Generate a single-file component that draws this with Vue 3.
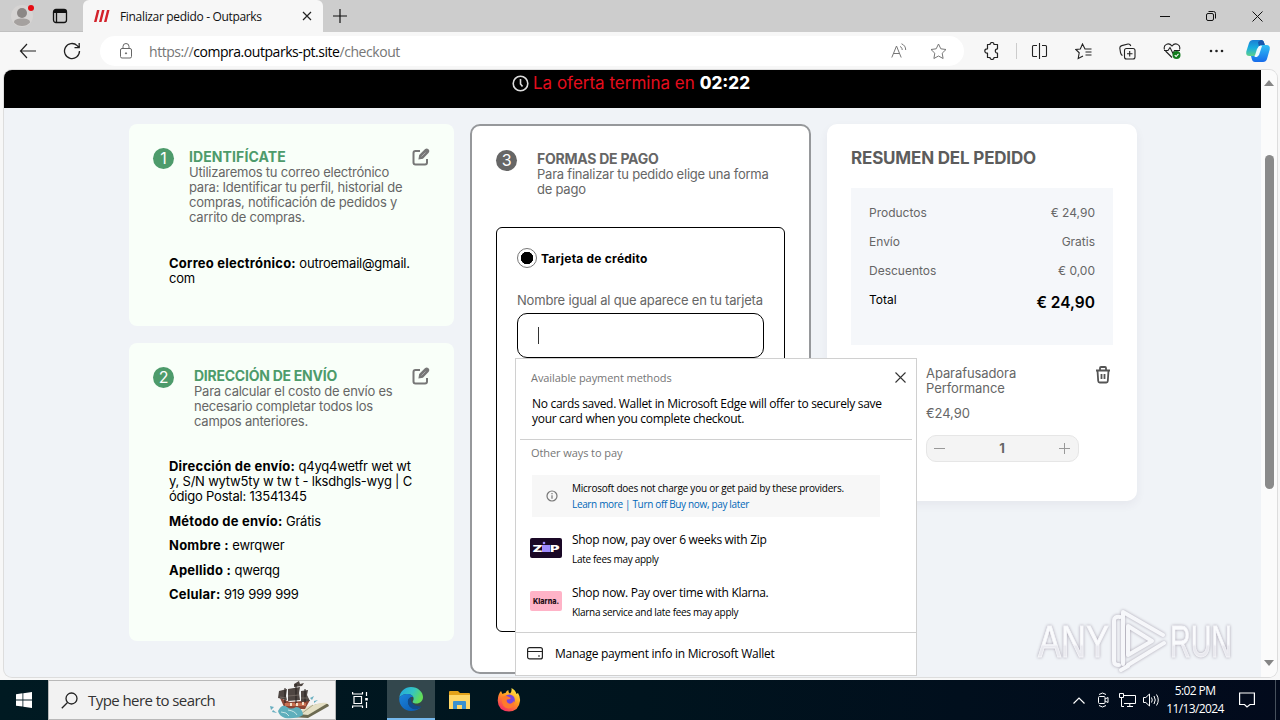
<template>
  <div class="screen">
    <!-- tab strip -->
    <div class="tabs">
      <div class="tabs-left">
        <svg class="avatar" width="26" height="26" viewBox="0 0 26 26">
          <circle cx="12" cy="15" r="11" fill="#d6d4d3" />
          <circle cx="12" cy="12" r="5" fill="#8b8785" />
          <path d="M4 21.500c0-3 3-4 8-4s8 1 8 4c-2 2.500-5 3.500-8 3.500s-6-1-8-3.500z" fill="#a5a19f" />
          <circle cx="21" cy="7" r="3" fill="#e60b12" />
        </svg>
        <svg class="actions" width="16" height="16" viewBox="0 0 16 16" fill="none" stroke="#111" stroke-width="1.300">
          <rect x="1.500" y="1.500" width="13" height="13" rx="2.500" />
          <path d="M2 3.500h12" stroke-width="3" />
          <path d="M4.500 4v10" />
        </svg>
      </div>
      <div class="tab">
        <svg width="17" height="14" viewBox="0 0 17 14" fill="#d3222b">
          <path d="M4 1h2.500L3.500 13H1zM9 1h2.500L8.500 13H6zM14 1h2.500l-3 12H11z" />
        </svg>
        <span class="tab-title">Finalizar pedido - Outparks</span>
        <svg class="tab-close" width="10" height="10" viewBox="0 0 10 10" stroke="#222" stroke-width="1.200"><path d="M1 1l8 8M9 1L1 9" /></svg>
      </div>
      <svg class="plus" width="14" height="14" viewBox="0 0 14 14" stroke="#111" stroke-width="1.200"><path d="M7 0v14M0 7h14" /></svg>
      <div class="win">
        <svg width="10" height="10" viewBox="0 0 10 10" stroke="#111"><path d="M0 5.500h10" /></svg>
        <svg width="12" height="12" viewBox="0 0 12 12" fill="none" stroke="#111"><rect x="1.500" y="3.500" width="7" height="7" rx="1.500" /><path d="M3.500 1.500h5a2 2 0 0 1 2 2v5" /></svg>
        <svg width="11" height="11" viewBox="0 0 11 11" stroke="#111"><path d="M.5.5l10 10M10.500.5l-10 10" /></svg>
      </div>
    </div>

    <!-- address bar -->
    <div class="toolbar">
      <svg class="back" width="18" height="16" viewBox="0 0 18 16" fill="none" stroke="#222" stroke-width="1.200"><path d="M8 1L1.500 8 8 15M1.500 8H17" /></svg>
      <svg class="reload" width="18" height="18" viewBox="0 0 18 18" fill="none" stroke="#222" stroke-width="1.300"><path d="M16.500 9A7.500 7.500 0 1 1 14.200 3.600L16 5.500M16.200 1v4.700h-4.700" /></svg>
      <div class="address">
        <svg width="14" height="16" viewBox="0 0 14 16" fill="none" stroke="#666"><rect x="1.500" y="5.500" width="11" height="9.500" rx="1.500" /><path d="M4 5.500V3.500a3 3 0 0 1 6 0v2" /><circle cx="7" cy="10.300" r=".6" fill="#666" /></svg>
        <span class="url">https://<b>compra.outparks-pt.site</b>/checkout</span>
        <svg class="read" width="16" height="16" viewBox="0 0 16 16" fill="none" stroke="#777"><path d="M.8 14.500L5.500 3l4.700 11.500M2.500 10.500h6M9 3.500c1.500.6 2.200 1.800 2.200 3.500M10.500.8c2.700 1 4.200 3.200 4.200 6.200" /></svg>
        <svg width="17" height="17" viewBox="0 0 17 17" fill="none" stroke="#777"><path :d="starPath" /></svg>
      </div>
      <div class="tools">
        <svg width="17" height="18" viewBox="0 0 17 18" fill="none" stroke="#222" stroke-width="1.200" stroke-linejoin="round"><path d="M4.500 2.500H7a2 2 0 0 1 4 0h3.500v4.300a2.200 2.200 0 0 0 0 4.400v4.300H11a2 2 0 0 1-4 0H4.500v-4.300H4a2.200 2.200 0 0 1 0-4.400h.5z" /></svg>
        <i class="bar"></i>
        <svg width="17" height="16" viewBox="0 0 17 16" fill="none" stroke="#222" stroke-width="1.100"><path d="M6 2.500H2.500q-1 0-1 1v9q0 1 1 1H6M11 2.500h3.500q1 0 1 1v9q0 1-1 1H11M8.500 0v16" /></svg>
        <svg width="17" height="17" viewBox="0 0 17 17" fill="none" stroke="#222" stroke-width="1.100"><path d="M11 6H10L7.500 1 5.300 6 .8 6.500l3.400 3.300-1 5.700L8 13M10.500 6h6M10.500 9h6M10.500 12h6" /></svg>
        <svg width="17" height="17" viewBox="0 0 17 17" fill="none" stroke="#222" stroke-width="1.100"><rect x="5.500" y="5.500" width="10.500" height="10.500" rx="2" /><path d="M10.700 8v5.500M8 10.700h5.500M3.500 12.500C2 12 2 11 1.500 9.500L.8 5c0-1.500.7-2 2-2.400L9 1c1.500-.2 2.300.3 2.800 2" /></svg>
        <svg width="19" height="18" viewBox="0 0 19 18" fill="none" stroke="#222" stroke-width="1.100"><path d="M9 15.500L2.500 9M1.500 7.500C0 3 5.500-.5 9 4c3.500-4.500 9-1 7.500 3.500M1 8.500h4L7 5.500l3 6 1.500-3H17" /><circle cx="13.500" cy="13" r="4" fill="#117b1c" stroke="none" /><path d="M11.700 13.200l1.400 1.300 2.400-2.600" stroke="#fff" /></svg>
        <svg width="15" height="4" viewBox="0 0 15 4" fill="#222"><circle cx="2" cy="2" r="1.300" /><circle cx="7.500" cy="2" r="1.300" /><circle cx="13" cy="2" r="1.300" /></svg>
      </div>
      <svg class="copilot" width="26" height="24" viewBox="0 0 26 24">
        <defs>
          <linearGradient id="cp1" x1="0" y1="0" x2="0" y2="1"><stop offset="0" stop-color="#1a7fd4" /><stop offset=".5" stop-color="#18aee0" /><stop offset="1" stop-color="#5fd08a" /></linearGradient>
          <linearGradient id="cp2" x1="0" y1="0" x2="0" y2="1"><stop offset="0" stop-color="#2fc0f5" /><stop offset="1" stop-color="#176bea" /></linearGradient>
        </defs>
        <path d="M8 1h8q2.500 0 3.200 3l.6 2h-3.600q-2 0-2.700 2.500l-1.800 6q-.8 2.500-3 2.500H4.500Q.5 17 1.300 12.500L4 4Q5 1 8 1z" fill="url(#cp1)" />
        <path d="M18 23h-8q-2.500 0-3.200-3l-.8-3h3.500q2.300 0 3-2.500l1.800-6Q15 6 17 6h4.500q4 0 3.200 4.500L22 20q-1 3-4 3z" fill="url(#cp2)" />
        <path d="M16 1q2.500 0 3.200 3l.6 2h-3.600q-1.500 0-2.300 1.500L13 3z" fill="#1857ad" />
        <path d="M12 10l2-3h3l-3 9-2 2H9.500z" fill="#eefaff" />
      </svg>
    </div>

    <!-- web page -->
    <div class="viewport">
      <div class="page">
        <div class="offer">
          <svg width="17" height="17" viewBox="0 0 17 17" fill="none" stroke="#ddd" stroke-width="1.600"><circle cx="8.500" cy="8.500" r="7.300" /><path d="M8.500 4v5l2 2.500" /></svg>
          <span class="offer-text">La oferta termina en</span>
          <span class="offer-time">02:22</span>
        </div>
        <div class="columns">
          <div class="left">
            <section v-for="step in steps" :key="step.n" class="card done" :class="'step' + step.n">
              <div class="head">
                <span class="num">{{ step.n }}</span>
                <div class="head-text">
                  <h2>{{ step.title }}</h2>
                  <p v-for="line in step.lines" :key="line">{{ line }}</p>
                </div>
                <svg class="edit" width="18" height="18" viewBox="0 0 18 18" fill="none" stroke="#777"><path d="M8 3H3.500Q1.500 3 1.500 5v9.500q0 2 2 2H13q2 0 2-2V11" stroke-width="2" /><path d="M7.500 10.500l.5-3L13.500 2q1.200-1 2.300 0t0 2.300L10.500 10z" fill="#777" stroke-width="1.800" /><path d="M9.500 8.500l4-4" stroke="#ccc" stroke-width=".6" /></svg>
              </div>
              <div class="info">
                <div v-for="row in step.rows" :key="row.label" class="info-row">
                  <div><b>{{ row.label }}</b> {{ row.value[0] }}</div>
                  <div v-for="more in row.value.slice(1)" :key="more">{{ more }}</div>
                </div>
              </div>
            </section>
          </div>

          <section class="pay">
            <div class="head">
              <span class="num">3</span>
              <div class="head-text">
                <h2>FORMAS DE PAGO</h2>
                <p>Para finalizar tu pedido elige una forma</p>
                <p>de pago</p>
              </div>
            </div>
            <div class="method">
              <div class="radio"><i></i><b>Tarjeta de crédito</b></div>
              <label>Nombre igual al que aparece en tu tarjeta</label>
              <div class="field"><i class="caret"></i></div>
            </div>
          </section>

          <section class="summary">
            <h2>RESUMEN DEL PEDIDO</h2>
            <div class="totals">
              <div v-for="t in totals" :key="t.name" class="total-row"><span>{{ t.name }}</span><span>{{ t.price }}</span></div>
              <div class="total-row grand"><span>Total</span><strong>€ 24,90</strong></div>
            </div>
            <div class="product">
              <div class="product-text">
                <p>Aparafusadora</p>
                <p>Performance</p>
                <p class="price">€24,90</p>
                <div class="qty">
                  <svg width="11" height="11" viewBox="0 0 11 11" stroke="#999"><path d="M0 5.500h11" /></svg>
                  <b>1</b>
                  <svg width="11" height="11" viewBox="0 0 11 11" stroke="#999"><path d="M0 5.500h11M5.500 0v11" /></svg>
                </div>
              </div>
              <svg width="16" height="18" viewBox="0 0 16 18" fill="none" stroke="#555" stroke-width="1.800"><path d="M1 4.500h14M5 4V2q0-1 1-1h4q1 0 1 1v2M2.500 4.500l.7 10.500q.1 1.500 1.500 1.500h6.600q1.400 0 1.500-1.500l.7-10.500M6.500 8v5M9.500 8v5" /></svg>
            </div>
          </section>
        </div>

        <svg class="watermark" width="210" height="76" viewBox="0 0 210 76">
          <defs><linearGradient id="wm" x1="0" y1="0" x2="0" y2="1"><stop offset=".55" stop-color="#fafbfd" /><stop offset=".6" stop-color="#e9e9ef" /></linearGradient></defs>
          <g fill="url(#wm)" stroke="#f6f7fa" stroke-width=".8">
            <text x="2" y="49" textLength="71" lengthAdjust="spacingAndGlyphs">ANY</text>
            <text x="134" y="49" textLength="62" lengthAdjust="spacingAndGlyphs">RUN</text>
          </g>
          <g fill="none" stroke="#f6f7fa" stroke-width="4" stroke-linejoin="round" stroke-linecap="round">
            <path d="M84 9q-6-1-6 4v40q0 4 5 4M87 50V4l40 23M87 20v36M92 57l36-22M92 18l24 15-24 14zM85 62l7-4" />
          </g>
        </svg>
      </div>
      <div class="scroll">
        <svg width="10" height="6" viewBox="0 0 10 6"><path d="M5 0l5 6H0z" fill="#858585" /></svg>
        <i></i>
        <svg width="10" height="6" viewBox="0 0 10 6"><path d="M5 6l5-6H0z" fill="#858585" /></svg>
      </div>
    </div>

    <!-- wallet autofill popup -->
    <div class="wallet">
      <div class="wallet-top">
        <span class="muted">Available payment methods</span>
        <svg width="11" height="11" viewBox="0 0 11 11" stroke="#333" stroke-width="1.100"><path d="M.5.5l10 10M10.500.5l-10 10" /></svg>
      </div>
      <div class="nocards">
        <p>No cards saved. Wallet in Microsoft Edge will offer to securely save</p>
        <p>your card when you complete checkout.</p>
      </div>
      <div class="muted other">Other ways to pay</div>
      <div class="notice">
        <svg width="12" height="12" viewBox="0 0 12 12" fill="none" stroke="#777" stroke-width="1.200"><circle cx="6" cy="6" r="5" /><path d="M6 5.200v3.500M6 3v1.200" /></svg>
        <div>
          <p>Microsoft does not charge you or get paid by these providers.</p>
          <p class="links">Learn more | Turn off Buy now, pay later</p>
        </div>
      </div>
      <div class="offer-row">
        <svg width="32" height="20" viewBox="0 0 32 20">
          <rect width="32" height="20" rx="2" fill="#1a0826" />
          <rect x="12" y="7" width="8" height="7" fill="#a08cff" />
          <circle cx="14" cy="5" r="1.300" fill="#a08cff" />
          <text class="zip" x="2.500" y="14" textLength="10" lengthAdjust="spacingAndGlyphs">Z</text>
          <text class="zip" x="20" y="14" textLength="9.500" lengthAdjust="spacingAndGlyphs">P</text>
        </svg>
        <div><p class="big">Shop now, pay over 6 weeks with Zip</p><p class="small">Late fees may apply</p></div>
      </div>
      <div class="offer-row second">
        <svg width="32" height="20" viewBox="0 0 32 20">
          <rect width="32" height="20" rx="2" fill="#ffb3c7" />
          <text class="klarna" x="3" y="13" textLength="26" lengthAdjust="spacingAndGlyphs">Klarna.</text>
        </svg>
        <div><p class="big">Shop now. Pay over time with Klarna.</p><p class="small">Klarna service and late fees may apply</p></div>
      </div>
      <div class="manage">
        <svg width="16" height="13" viewBox="0 0 16 13" fill="none" stroke="#222" stroke-width="1.200"><rect x=".6" y=".6" width="14.800" height="11.300" rx="2" /><path d="M.6 4.500h14.800M11 9h2" /></svg>
        <span>Manage payment info in Microsoft Wallet</span>
      </div>
    </div>

    <!-- windows taskbar -->
    <div class="taskbar">
      <div class="start"><svg width="16" height="16" viewBox="0 0 16 16" fill="#fff"><path d="M0 2.200L6.500 1.300v6.200H0zM7.300 1.200L16 0v7.500H7.300zM0 8.400h6.500v6.200L0 13.700zM7.300 8.400H16V16l-8.700-1.200z" /></svg></div>
      <div class="search">
        <svg width="17" height="17" viewBox="0 0 17 17" fill="none" stroke="#222" stroke-width="1.300"><circle cx="10.500" cy="6.500" r="5.500" /><path d="M6.500 10.500L.8 16.200" /></svg>
        <span>Type here to search</span>
        <svg class="ship" width="62" height="38" viewBox="0 0 62 38">
          <path d="M29 33l17-9q6-2 14-1l1 2-21 12-17-1z" fill="#6c6a51" />
          <path d="M31 32q7-8 15-8 6-3 14-2L40 34q-5 0-9-2z" fill="#e4dfc4" />
          <path d="M45 24L33 33" stroke="#aaa688" />
          <path d="M12 17l5 11h20l5-9-8 1-12 1z" fill="#8c4635" />
          <path d="M17 22h21v3H17z" fill="#c76f50" />
          <path d="M10 30q4-8 9-4 4 3 9 0 6 0 7 8-6 4-18 3-6-2-7-7z" fill="#5fafbc" />
          <path d="M13 31q6 0 8 4M20 29q7 1 9 5" stroke="#c6e5e6" fill="none" />
          <path d="M2 25l4 1-3 3zM5 29l4 3-5-1zM42 17l4-2-2 4zM46 20l4-1-4 3z" fill="#68aec0" />
          <path d="M11 10l8-2-1 7 1 4-9-2zM20 8l12-2-1 6 1 7-12 1zM33 10l7-1-1 5 3 6-9 1zM26 3l5-3 1 3 4-1-2 3-8 1z" fill="#4f4642" />
          <path d="M17 7v15M28 3v20M37 8v13" stroke="#241e1c" />
          <path d="M12 16l6 1M20 15l11-1M33 17l7 0" stroke="#7a6e68" stroke-width=".8" />
          <path d="M22 22h2v3h-2zM28 22h2v3h-2zM34 21h2v3h-2z" fill="#f2dfc8" />
        </svg>
      </div>
      <div class="app">
        <svg width="16" height="16" viewBox="0 0 16 16" fill="none" stroke="#fff" stroke-width="1.200"><path d="M0 2h11M0 14h11M2 4.500h7.500v7H2zM.6 0v2M.6 14v2M10.500 0v2M10.500 14v2M14.500 0v4M14.500 10v6" /><path d="M13.200 6h2.600v2.500h-2.600z" fill="#fff" stroke="none" /></svg>
      </div>
      <div class="app active">
        <svg width="24" height="24" viewBox="0 0 24 24">
          <defs>
            <linearGradient id="eg1" x1="0" y1="0" x2="1" y2=".4"><stop offset="0" stop-color="#1fa4e4" /><stop offset=".6" stop-color="#35c5c0" /><stop offset="1" stop-color="#62dc58" /></linearGradient>
            <linearGradient id="eg2" x1="0" y1="0" x2="1" y2="1"><stop offset="0" stop-color="#1b84dc" /><stop offset="1" stop-color="#0b57ae" /></linearGradient>
          </defs>
          <path d="M.3 11C1 4 6 0 12 0c7 0 12 5 12 10 0 4-3 6.500-6.500 6.500-3 0-4.500-1-3.500-2.500 2-3-.5-7-5-7C5 7 1.500 8.500.3 11z" fill="url(#eg1)" />
          <path d="M.3 11C1.500 8.500 5 7 9 7c3 0 5 2 5.500 3.500-2-1.500-6 1-5.500 5 .5 5 6 8 11 5.500l2-1C20 22.500 16 24 12 24 5 24-.5 18 .3 11z" fill="url(#eg2)" />
          <path d="M9 15.500c-.5-3 1.500-5 3-5.500-1 3 0 9 9.500 9.500l.8.300C20 21.500 17.500 22.300 16 22.200 12 22 9.500 19 9 15.500z" fill="#114a8b" />
        </svg>
      </div>
      <div class="app">
        <svg width="22" height="20" viewBox="0 0 22 20">
          <path d="M1 1h8l2 2h9q1 0 1 1v14H0V2q0-1 1-1z" fill="#e3a21a" /><path d="M0 5h21v14H0z" fill="#ffd768" /><path d="M4 19v-7q0-1 1-1h11q1 0 1 1v7h-4v-4H8v4z" fill="#3a91cf" />
        </svg>
      </div>
      <div class="app">
        <svg width="24" height="24" viewBox="0 0 24 24">
          <defs><linearGradient id="fx" x1=".8" y1="0" x2=".2" y2="1"><stop offset="0" stop-color="#fff04a" /><stop offset=".45" stop-color="#ff9a20" /><stop offset="1" stop-color="#f5246a" /></linearGradient></defs>
          <path d="M4 3l1.500 3q1.500-1 3-1 1-2.500 3-3-.5 2.500 1.500 3.500Q15 4 14.500 0q4 2 5 6l1.500-1q2.500 4 2 8-1 10-11 10.500Q1 23 .7 12.500 1 6 4 3z" fill="url(#fx)" />
          <circle cx="12.300" cy="12" r="5.500" fill="#7545df" /><path d="M5 9q4-2 7 0l2 1q-2 2-4 1.500-1 2 1 3.500 3 2 6-2 1 7-5.500 7.500Q4 20 5 9z" fill="#ff7a2d" />
        </svg>
      </div>
      <div class="tray">
        <svg width="12" height="7" viewBox="0 0 12 7" fill="none" stroke="#fff" stroke-width="1.200"><path d="M.5 6.500L6 1l5.500 5.500" /></svg>
        <svg width="12" height="16" viewBox="0 0 12 16" fill="none" stroke="#fff"><rect x="1.500" y="4.500" width="6.500" height="7" rx="1" /><path d="M8 7l3-1.500v5L8 9M2 2.500q3.500-3 7 0M2 13.500q3.500 3 7 0" /></svg>
        <svg width="17" height="14" viewBox="0 0 17 14" fill="none" stroke="#fff"><path d="M5 2.500h11.500v8H5M8 13.500h6M10.800 10.500v3M.5.500h4v4h-4zM2.500 4.500v9H5" /></svg>
        <svg width="17" height="14" viewBox="0 0 17 14" fill="none" stroke="#fff"><path d="M.5 4.500h2.300L6.500 1v12L2.800 9.500H.5zM8.500 4.500q1.500 2.500 0 5M11 3q2.500 4 0 8M13.500 1.500q3.500 5.500 0 11" /></svg>
      </div>
      <div class="clock"><span>5:02 PM</span><span>11/13/2024</span></div>
      <svg class="notes" width="16" height="16" viewBox="0 0 16 16" fill="none" stroke="#fff" stroke-width="1.200"><path d="M.6 1h14.800v11.500H11L8 15l-2.500-2.500H.6z" /></svg>
      <i class="peek"></i>
    </div>
  </div>
</template>

<script setup>
import { ref } from "vue";

const starPath =
  "M8.500 1l2.300 4.800 5.200.7-3.800 3.700.9 5.300-4.600-2.500-4.600 2.500.9-5.300L1 6.500l5.200-.7z";

const steps = ref([
  {
    n: 1,
    title: "IDENTIFÍCATE",
    lines: [
      "Utilizaremos tu correo electrónico",
      "para: Identificar tu perfil, historial de",
      "compras, notificación de pedidos y",
      "carrito de compras.",
    ],
    rows: [{ label: "Correo electrónico:", value: ["outroemail@gmail.", "com"] }],
  },
  {
    n: 2,
    title: "DIRECCIÓN DE ENVÍO",
    lines: [
      "Para calcular el costo de envío es",
      "necesario completar todos los",
      "campos anteriores.",
    ],
    rows: [
      {
        label: "Dirección de envío:",
        value: [
          "q4yq4wetfr wet wt",
          "y, S/N wytw5ty w tw t - lksdhgls-wyg | C",
          "ódigo Postal: 13541345",
        ],
      },
      { label: "Método de envío:", value: ["Grátis"] },
      { label: "Nombre :", value: ["ewrqwer"] },
      { label: "Apellido :", value: ["qwerqg"] },
      { label: "Celular:", value: ["919 999 999"] },
    ],
  },
]);

const totals = ref([
  { name: "Productos", price: "€ 24,90" },
  { name: "Envío", price: "Gratis" },
  { name: "Descuentos", price: "€ 0,00" },
]);
</script>

<style>
body {
  margin: 0;
  overflow: hidden;
}
</style>

<style scoped>
* {
  box-sizing: border-box;
}
p,
h2 {
  margin: 0;
}
svg {
  flex: none;
}
.screen {
  position: relative;
  display: flex;
  flex-direction: column;
  width: 1280px;
  height: 720px;
  overflow: hidden;
  background: #f7f7f7;
  font-family: "Open Sans", sans-serif;
  white-space: nowrap;
}
/* tab strip */
.tabs {
  display: flex;
  height: 32px;
  background: #cdcdcd;
}
.tabs-left {
  display: flex;
  align-items: center;
  width: 83px;
  padding-left: 10px;
  gap: 16px;
  border-bottom: 1px solid #c0c0c0;
}
.avatar {
  margin-top: -4px;
}
.tab {
  display: flex;
  align-items: center;
  width: 240px;
  padding: 0 11px 0 10px;
  background: #f7f7f7;
  border-radius: 6px 6px 0 0;
}
.tab-title {
  margin-left: 10px;
  font-size: 12px;
  letter-spacing: -0.33px;
  color: #111;
}
.tab-close {
  margin-left: auto;
}
.plus {
  margin: 9px 0 0 10px;
}
.win {
  display: flex;
  align-items: center;
  gap: 35px;
  margin-left: auto;
  padding-right: 17px;
}
/* address bar */
.toolbar {
  display: flex;
  align-items: center;
  height: 38px;
  padding: 0 9px 0 19px;
}
.reload {
  margin-left: 26px;
}
.address {
  display: flex;
  align-items: center;
  width: 864px;
  height: 30px;
  margin-left: 19px;
  padding: 0 17px 0 19px;
  background: #fff;
  border-radius: 15px;
}
.url {
  margin-left: 16px;
  font-size: 14px;
  letter-spacing: -0.45px;
  color: #767676;
}
.url b {
  font-weight: 400;
  color: #000;
}
.read {
  margin: 0 23px 0 auto;
}
.tools {
  display: flex;
  align-items: center;
  gap: 27px;
  margin-left: 19px;
}
.bar {
  width: 1px;
  height: 16px;
  margin: 0 -13px 0 -11px;
  background: #ccc;
}
.copilot {
  margin-left: auto;
}
/* page */
.viewport {
  display: flex;
  width: 1273px;
  height: 607px;
  margin-left: 4px;
  border-radius: 8px;
  overflow: hidden;
  background: #f0f3f7;
  box-shadow: 0 0 0 1px #ddd;
}
.page {
  position: relative;
  width: 1257px;
  font-family: Inter, sans-serif;
}
.offer {
  display: flex;
  justify-content: center;
  height: 38px;
  padding: 5px 3px 0 0;
  background: #000;
  font-size: 17px;
  line-height: 17px;
}
.offer-text {
  margin-left: 4px;
  color: #e50d1d;
}
.offer-time {
  margin-left: 5px;
  font-weight: 800;
  color: #fff;
}
.columns {
  display: flex;
  align-items: flex-start;
  gap: 16px;
  padding: 16px 0 0 125px;
}
.left {
  display: flex;
  flex-direction: column;
  gap: 17px;
}
.card {
  width: 325px;
  padding: 24px;
  background: #f9fff9;
  border-radius: 8px;
}
.step1 {
  height: 202px;
}
.step2 {
  height: 298px;
}
.head {
  display: flex;
  align-items: flex-start;
  font-size: 13px;
  line-height: 15px;
  letter-spacing: -0.23px;
  color: #666;
}
.num {
  flex: none;
  width: 21px;
  height: 21px;
  border-radius: 50%;
  background: #4d9b6b;
  color: #fff;
  font-size: 16px;
  line-height: 21px;
  text-align: center;
}
.head-text {
  margin-left: 15px;
}
.step2 .head-text {
  margin-left: 20px;
}
.head h2 {
  font-size: 14px;
  line-height: 17px;
  font-weight: 700;
  letter-spacing: -0.25px;
}
.done h2 {
  color: #4d9b6b;
}
.step1 .head h2 {
  letter-spacing: 0.1px;
}
.edit {
  margin-left: auto;
}
.info {
  padding: 31px 0 0 16px;
  font-size: 13px;
  line-height: 15px;
  letter-spacing: -0.21px;
  color: #000;
}
.step2 .info {
  padding-top: 30px;
}
.info b {
  letter-spacing: 0.22px;
}
.info-row {
  margin-bottom: 9.500px;
}
.pay {
  width: 341px;
  height: 550px;
  padding: 24px;
  background: #fff;
  border: 2px solid #96989b;
  border-radius: 10px;
}
.pay .num {
  background: #666;
}
.pay .head-text {
  margin-left: 20px;
}
.method {
  height: 405px;
  margin-top: 30px;
  padding: 20px;
  border: 1px solid #000;
  border-radius: 6px;
}
.radio {
  display: flex;
  align-items: center;
  font-size: 12px;
  letter-spacing: 0.22px;
}
.radio i {
  width: 20px;
  height: 20px;
  margin-right: 4px;
  border: 1px solid #777;
  border-radius: 50%;
  background: radial-gradient(#000 6px, #fff 6.500px);
}
.method label {
  display: block;
  margin-top: 25px;
  font-size: 13px;
  line-height: 15px;
  letter-spacing: -0.2px;
  color: #666;
}
.field {
  width: 247px;
  height: 45px;
  margin-top: 5px;
  padding: 13px 20px;
  border: 1px solid #000;
  border-radius: 10px;
}
.caret {
  display: block;
  width: 1px;
  height: 17px;
  background: #333;
}
.summary {
  width: 310px;
  height: 377px;
  padding: 24px;
  background: #fff;
  border-radius: 10px;
  box-shadow: 0 4px 10px rgba(60, 50, 80, 0.06);
}
.summary h2 {
  font-size: 17px;
  line-height: 20px;
  font-weight: 700;
  letter-spacing: -0.18px;
  color: #5c5c5c;
}
.totals {
  height: 157px;
  margin-top: 20px;
  padding: 17px 18px;
  background: #f5f7fa;
}
.total-row {
  display: flex;
  justify-content: space-between;
  height: 29px;
  font-size: 12px;
  line-height: 15px;
  color: #666;
}
.grand {
  color: #000;
}
.grand strong {
  font-size: 15.500px;
  line-height: 21px;
  font-weight: 600;
}
.product {
  display: flex;
  justify-content: space-between;
  margin-top: 21px;
  padding: 0 2px 0 75px;
  font-size: 13px;
  line-height: 15px;
  letter-spacing: -0.08px;
  color: #666;
}
.price {
  margin-top: 10px;
}
.qty {
  display: flex;
  align-items: center;
  justify-content: space-between;
  width: 153px;
  height: 27px;
  margin-top: 14px;
  padding: 0 8px 0 7px;
  border: 1px solid #e6e6e6;
  border-radius: 10px;
  background: #f4f4f4;
}
.watermark {
  position: absolute;
  left: 1032px;
  top: 538px;
  overflow: visible;
  font-family: "Liberation Sans", Arial, sans-serif;
  font-size: 45px;
  line-height: 1;
  filter: drop-shadow(0 0 1.500px #a5a0ae);
}
.scroll {
  display: flex;
  flex-direction: column;
  align-items: center;
  width: 16px;
  padding: 10px 0 11px;
  background: #fbfbfb;
}
.scroll i {
  width: 9px;
  height: 334px;
  margin: 69px 0 auto;
  border-radius: 5px;
  background: #8a8a8a;
}
/* popup */
.wallet {
  position: absolute;
  left: 515px;
  top: 358px;
  width: 402px;
  height: 318px;
  background: #fff;
  border: 1px solid #d0d0d0;
  color: #000;
  letter-spacing: -0.3px;
}
.wallet-top {
  display: flex;
  align-items: center;
  justify-content: space-between;
  height: 36px;
  padding: 0 10px 0 15px;
}
.muted {
  font-size: 11px;
  letter-spacing: -0.08px;
  color: #767676;
}
.nocards {
  height: 45px;
  margin: 0 4px;
  padding: 1px 0 0 12px;
  border-bottom: 1px solid #d0d0d0;
  font-size: 12px;
  line-height: 15px;
}
.other {
  padding: 5px 0 0 15px;
  line-height: 15px;
}
.notice {
  display: flex;
  align-items: center;
  width: 348px;
  height: 42px;
  margin: 15px 0 0 16px;
  padding-left: 14px;
  background: #f7f7f7;
  font-size: 10px;
  line-height: 16px;
  letter-spacing: -0.23px;
}
.notice div {
  margin-left: 14px;
}
.links {
  letter-spacing: -0.34px;
  color: #0067b8;
}
.offer-row {
  display: flex;
  align-items: center;
  gap: 10px;
  height: 40px;
  margin-top: 12px;
  padding-left: 14px;
}
.offer-row svg {
  margin-top: -2px;
}
.second {
  margin-top: 13px;
}
.big {
  font-size: 12px;
  line-height: 20px;
}
.small {
  font-size: 10px;
  line-height: 18px;
}
.zip {
  font: 900 9px "Inter", sans-serif;
  letter-spacing: 0;
  fill: #fff;
}
.klarna {
  font: 800 8px "Inter", sans-serif;
  letter-spacing: 0;
  fill: #1c0d14;
}
.manage {
  display: flex;
  align-items: center;
  gap: 12px;
  height: 42px;
  margin-top: 10px;
  padding-left: 11px;
  border-top: 1px solid #d0d0d0;
  font-size: 12px;
  letter-spacing: -0.26px;
}
/* taskbar */
.taskbar {
  display: flex;
  height: 40px;
  margin-top: 3px;
  background: linear-gradient(90deg, #001a22, #00141e 50%, #020a1c);
}
.start {
  display: flex;
  align-items: center;
  justify-content: center;
  width: 48px;
}
.search {
  display: flex;
  align-items: center;
  width: 288px;
  padding-left: 12px;
  background: #f2f2f2;
  border: 1px solid #b8b8b8;
  font-size: 15px;
  color: #333;
}
.search span {
  margin-left: 10px;
  letter-spacing: -0.57px;
}
.ship {
  margin: 0 5px 0 auto;
}
.app {
  display: flex;
  align-items: center;
  justify-content: center;
  width: 48px;
  margin-right: 1px;
}
.active {
  margin-left: 2px;
  background: #33474d;
  border-bottom: 2px solid #76b9ed;
}
.tray {
  display: grid;
  grid-template-columns: repeat(4, 24px);
  align-items: center;
  justify-items: center;
  margin-left: auto;
}
.clock {
  display: flex;
  flex-direction: column;
  align-items: center;
  width: 58px;
  margin: 2px 0 0 3px;
  font-size: 12px;
  line-height: 18px;
  letter-spacing: -0.6px;
  color: #fff;
}
.notes {
  margin: 12px 20px 0 15px;
}
.peek {
  width: 5px;
  border-left: 1px solid #46505c;
}
</style>
